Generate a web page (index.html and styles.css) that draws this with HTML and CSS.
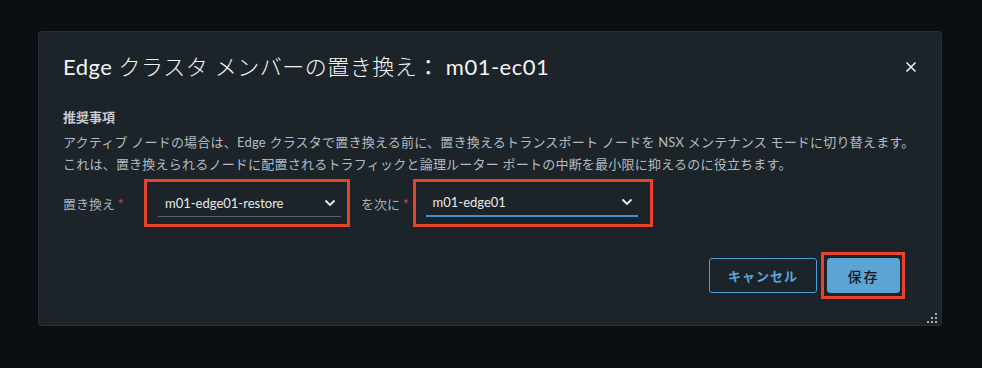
FILE: index.html
```html
<!DOCTYPE html>
<html lang="ja">
<head>
<meta charset="UTF-8" />
<title>Edge クラスタ メンバーの置き換え</title>
<link rel="stylesheet" href="styles.css">
</head>
<body>
<div class="backdrop">
  <div class="modal">
    <div class="modal-header">
      <h3 class="modal-title"><span class="lt">Edge</span> <span class="jp">クラスタ メンバーの置き換え</span>： <span class="lt">m01-ec01</span></h3>
      <button class="close" aria-label="閉じる">
        <svg width="12" height="12" viewBox="0 0 12 12"><path d="M1.5 1.5 L10.5 10.5 M10.5 1.5 L1.5 10.5" stroke="#e9edf0" stroke-width="1.6" fill="none"/></svg>
      </button>
    </div>

    <div class="modal-body">
      <p class="hint-title">推奨事項</p>
      <p class="hint">アクティブ ノードの場合は、Edge クラスタで置き換える前に、置き換えるトランスポート ノードを NSX メンテナンス モードに切り替えます。</p>
      <p class="hint">これは、置き換えられるノードに配置されるトラフィックと論理ルーター ポートの中断を最小限に抑えるのに役立ちます。</p>

      <div class="form-row">
        <label class="field-label">置き換え<span class="req">*</span></label>
        <div class="mark mark-first">
          <div class="select">
            <span>m01-edge01-restore</span>
            <svg class="chev" width="12" height="8" viewBox="0 0 12 8"><path d="M1.5 1.5 L6 6 L10.5 1.5" stroke="#eef1f3" stroke-width="1.8" fill="none"/></svg>
          </div>
        </div>
        <label class="field-label label-second">を次に<span class="req">*</span></label>
        <div class="mark mark-second">
          <div class="select focused">
            <span>m01-edge01</span>
            <svg class="chev" width="12" height="8" viewBox="0 0 12 8"><path d="M1.5 1.5 L6 6 L10.5 1.5" stroke="#eef1f3" stroke-width="1.8" fill="none"/></svg>
          </div>
        </div>
      </div>
    </div>

    <div class="modal-footer">
      <button class="btn btn-outline">キャンセル</button>
      <div class="mark mark-btn">
        <button class="btn btn-primary">保存</button>
      </div>
    </div>

    <svg class="grip" width="10" height="10" viewBox="0 0 10 10">
      <rect x="8" y="0" width="2" height="2" fill="#a7afb5"/>
      <rect x="4" y="4" width="2" height="2" fill="#a7afb5"/>
      <rect x="8" y="4" width="2" height="2" fill="#a7afb5"/>
      <rect x="0" y="8" width="2" height="2" fill="#a7afb5"/>
      <rect x="4" y="8" width="2" height="2" fill="#a7afb5"/>
      <rect x="8" y="8" width="2" height="2" fill="#a7afb5"/>
    </svg>
  </div>
</div>
</body>
</html>
```

FILE: styles.css
```css
body {
  margin: 0; padding: 0;
  background: #0b0e12;
  font-family: "Lato", "Noto Sans CJK JP", sans-serif;
  color: #b8c0c7;
}
.backdrop {
  width: 982px;
  height: 368px;
  padding: 31px 0 0 38px;
  box-sizing: border-box;
}
.modal {
  position: relative;
  width: 904px;
  box-sizing: border-box;
  background: #1c242a;
  border: 1px solid #262f35;
  border-radius: 3px;
  padding: 0 0 0 24px;
}
.modal-header {
  display: flex;
  align-items: center;
  padding: 21px 24px 0 0;
}
.modal-title {
  flex: 1;
  margin: 0;
  font-size: 22px;
  line-height: 28px;
  font-weight: 400;
  letter-spacing: 0.5px;
  color: #f2f4f6;
}
.modal-title .jp {
  font-weight: 300;
}
.close {
  background: none;
  border: 0;
  padding: 0;
  width: 12px;
  height: 12px;
  display: flex;
  cursor: pointer;
}
.modal-body {
  padding-top: 25px;
}
.hint-title {
  margin: 0 0 3px;
  font-size: 13px;
  line-height: 22px;
  font-weight: 700;
  color: #c6ccd1;
}
.hint {
  margin: 0;
  font-size: 13px;
  line-height: 22px;
  letter-spacing: 0.22px;
  color: #b3bbc2;
}
.form-row {
  display: flex;
  align-items: center;
  margin-top: 4px;
}
.field-label {
  font-size: 13px;
  color: #a9b2ba;
  width: 81px;
}
.label-second {
  width: auto;
  margin: 0 4px 0 11px;
}
.req {
  color: #e0463a;
  margin-left: 3px;
}
.mark {
  border: 3px solid #e8432c;
}
.mark-first {
  padding: 7px 6px 7px 11px;
}
.mark-second {
  padding: 7px 12px 7px 10px;
}
.select {
  display: flex;
  align-items: center;
  justify-content: space-between;
  height: 28px;
  box-sizing: border-box;
  border-bottom: 1px solid #59646d;
  padding: 0 5px 0 7px;
  font-size: 13px;
  color: #e6eaed;
}
.mark-first .select { width: 183px; }
.mark-second .select { width: 212px; }
.select.focused {
  border-bottom: 2px solid #3b8fd3;
}
.modal-footer {
  display: flex;
  justify-content: flex-end;
  align-items: center;
  gap: 4px;
  padding: 25px 36px 26px 0;
}
.btn {
  font-family: "Noto Sans CJK JP", sans-serif;
  font-size: 13px;
  font-weight: 700;
  letter-spacing: 1px;
  height: 35px;
  border-radius: 3px;
  cursor: pointer;
}
.btn-outline {
  width: 108px;
  background: transparent;
  border: 1px solid #4d9fd8;
  color: #5aa8de;
}
.btn-primary {
  width: 73px;
  font-size: 14px;
  font-weight: 500;
  letter-spacing: 2px;
  background: #5ba4d3;
  border: 1px solid #5ba4d3;
  color: #14191d;
  display: block;
}
.mark-btn {
  padding: 3px 2px 3px 3px;
}
.grip {
  position: absolute;
  right: 4px;
  bottom: 2px;
}
```
